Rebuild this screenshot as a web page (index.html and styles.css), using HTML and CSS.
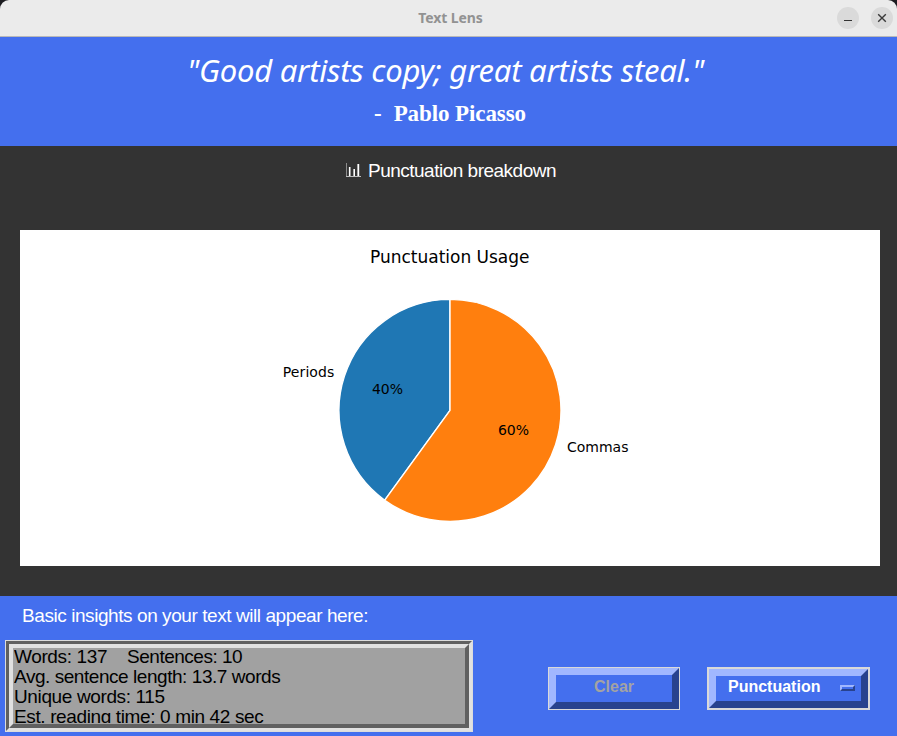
FILE: index.html
```html
<!DOCTYPE html>
<html lang="en">
<head>
<meta charset="utf-8">
<title>Text Lens</title>
<link rel="stylesheet" href="styles.css">
</head>
<body>
<div class="window">
  <header class="titlebar">
    <span class="title">Text Lens</span>
    <div class="controls">
      <button class="control" aria-label="Minimize"><svg width="22" height="22"><path d="M7 13.5h8" stroke="#333" fill="none"/></svg></button>
      <button class="control" aria-label="Close"><svg width="22" height="22"><path d="M7.2 7.2l7.6 7.6M14.8 7.2l-7.6 7.6" stroke="#3a3a3a" stroke-width="1.4" fill="none"/></svg></button>
    </div>
  </header>
  <section class="quote">
    <div class="quote-text"><span>"Good artists copy; great artists steal."</span></div>
    <div class="quote-author"><span class="dash">-</span><span>Pablo Picasso</span></div>
  </section>
  <main class="breakdown">
    <h1 class="heading">
      <svg class="bars" width="16" height="16"><path d="M1.5 0v14" stroke="#8d8d8d"/><path d="M1 13.5h15" stroke="#bdbdbd"/><path d="M4.7 4v9M9.2 6v7" stroke="#fff" stroke-width="1.6"/><path d="M13.3 1v12" stroke="#fff" stroke-width="1.8"/></svg>
      <span>Punctuation breakdown</span>
    </h1>
    <svg class="chart" width="860" height="336" viewBox="0 0 860 336">
      <path d="M430 180.4V69.4A111 111 0 0 0 364.75 270.2Z" fill="#1f77b4" stroke="#fff" stroke-width="1.4"/>
      <path d="M430 180.4L364.75 270.2A111 111 0 1 0 430 69.4Z" fill="#ff7f0e" stroke="#fff" stroke-width="1.4"/>
      <text class="chart-title" x="350" y="33" textLength="159.5">Punctuation Usage</text>
      <text x="262.8" y="147" textLength="51.5">Periods</text>
      <text x="547" y="222" textLength="61.5">Commas</text>
      <text x="352" y="164" textLength="31">40%</text>
      <text x="478" y="205" textLength="31">60%</text>
    </svg>
  </main>
  <footer class="insights">
    <div class="label"><span>Basic insights on your text will appear here:</span></div>
    <div class="row">
      <div class="frame"><div class="outer"><div class="inner"><div class="lines">
        <div class="line"><span class="words">Words: 137</span><span class="sentences">Sentences: 10</span></div>
        <div class="line average"><span>Avg. sentence length: 13.7 words</span></div>
        <div class="line"><span>Unique words: 115</span></div>
        <div class="line"><span>Est. reading time: 0 min 42 sec</span></div>
      </div></div></div></div>
      <div class="ring clear"><button class="bevel" disabled>Clear</button></div>
      <div class="ring menu"><button class="bevel"><span>Punctuation</span><i class="indicator"></i></button></div>
    </div>
  </footer>
</div>
</body>
</html>
```

FILE: styles.css
```css
* { box-sizing: border-box; }
body { margin: 0; background: #1c1c20; font-family: "Liberation Sans", sans-serif; overflow: hidden; }
button { margin: 0; padding: 0; font: inherit; }
.window { width: 897px; height: 736px; border-radius: 9px 9px 0 0; overflow: hidden; display: flex; flex-direction: column; }
.titlebar { height: 37px; background: #ebebeb; border-bottom: 1px solid #b9b9b9; display: grid; grid-template-columns: 1fr auto 1fr; align-items: center; padding: 0 4px; }
.title { grid-column: 2; font: 700 14px/36px "Noto Sans", sans-serif; color: #929292; letter-spacing: -0.1px; padding-left: 4px; }
.controls { display: flex; gap: 12px; justify-content: flex-end; }
.control { width: 22px; height: 22px; border: 0; border-radius: 50%; background: #dadada; }
.control svg { display: block; }
.quote { height: 109px; background: #446fee; color: #fff; text-align: center; padding-top: 12px; }
.quote-text { font: italic 400 31px/42px "Noto Sans", sans-serif; letter-spacing: -0.22px; padding-right: 6px; white-space: nowrap; }
.quote-author { font: 700 23px/30px "Liberation Serif", serif; letter-spacing: -0.1px; margin-top: 8px; padding-left: 3px; white-space: nowrap; }
.dash { margin-right: 12px; }
.breakdown { height: 450px; background: #333; padding: 0 17px 0 20px; }
.heading { height: 84px; margin: 0; padding: 14px 0 0 1px; display: flex; justify-content: center; align-items: flex-start; gap: 7px; font-weight: 400; font-size: 19px; line-height: 22px; letter-spacing: -0.5px; color: #fff; }
.bars { margin-top: 3px; }
.chart { display: block; background: #fff; font: 14px "DejaVu Sans", sans-serif; }
.chart-title { font-size: 17px; }
.insights { height: 140px; background: #446fee; color: #fff; }
.label { height: 44px; padding: 9px 0 0 22px; font-size: 19px; line-height: 22px; letter-spacing: -0.43px; }
.row { display: flex; align-items: flex-start; padding-left: 5px; }
.frame { width: 468px; height: 92px; border: 1px solid #dcdcdc; }
.outer { height: 100%; border: 3px solid; border-color: #606060 #e1e1e1 #e1e1e1 #606060; }
.inner { height: 100%; border: 4px solid; border-color: #e1e1e1 #606060 #606060 #e1e1e1; background: #a1a1a1; color: #000; padding: 0 1px 1px; font-size: 19px; line-height: 20px; letter-spacing: -0.37px; white-space: nowrap; }
.lines { height: 75px; overflow: hidden; }
.line { height: 20px; }
.line:first-child { margin-top: -1px; }
.average { letter-spacing: -0.45px; }
.sentences { margin-left: 20px; letter-spacing: -0.5px; }
.ring { border: 1px solid #d9d9d9; height: 43px; margin-top: 27px; }
.bevel { display: flex; align-items: center; justify-content: center; width: 100%; height: 100%; border: 7px solid; border-color: #a1b7ff #28428e #28428e #a1b7ff; background: #446fee; color: #fff; font-weight: 700; font-size: 16px; line-height: 20px; padding-bottom: 3px; }
.clear { width: 132px; margin-left: 75px; }
.clear .bevel { color: #a3a3a3; }
.menu { width: 163px; margin-left: 27px; border-width: 2px; }
.menu .bevel { justify-content: space-between; padding: 0 6px 3px 12px; }
.indicator { width: 15px; height: 6px; border: 2px solid; border-color: #a1b7ff #28428e #28428e #a1b7ff; margin-top: 2px; }
```
